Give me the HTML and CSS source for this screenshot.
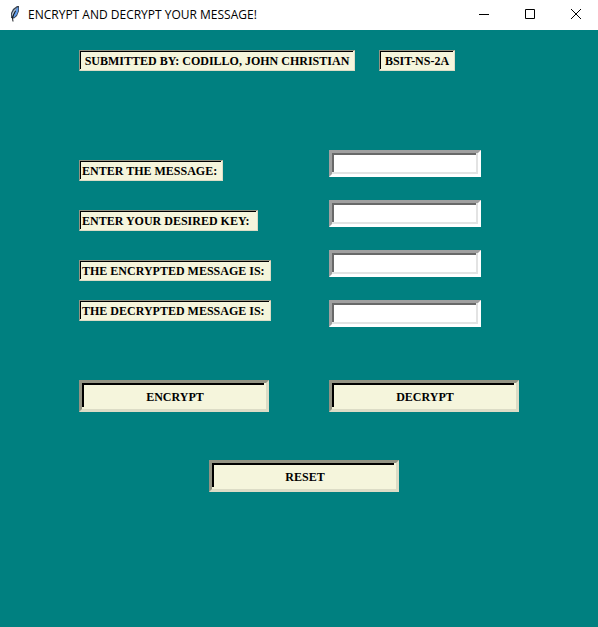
FILE: index.html
```html
<!DOCTYPE html>
<html lang="en">
<head>
<meta charset="utf-8">
<title>ENCRYPT AND DECRYPT YOUR MESSAGE!</title>
<link rel="stylesheet" href="styles.css">
</head>
<body>
<header class="titlebar">
  <svg class="feather" width="12" height="16" viewBox="0 0 12 16" aria-hidden="true">
    <path d="M8 0H10V5L8 10 5 12.500 2 12V7L4 3Z" fill="#39424e"/>
    <path d="M8 1.500 9.300 1.500 9.200 5 7.500 9 5 11.500 4 11 6 6Z" fill="#5f9cec"/>
    <path d="M8 1.500 5 4 3 7.500 2.800 11 5.500 6Z" fill="#b4c2d2"/>
    <path d="M6.500 5 4.500 9 3.500 12 4 15.500" fill="none" stroke="#15181c"/>
  </svg>
  <h1 class="title">ENCRYPT AND DECRYPT YOUR MESSAGE!</h1>
  <div class="controls">
    <button class="control" type="button" aria-label="Minimize">
      <svg width="10" height="10" viewBox="0 0 10 10"><path d="M0 5.500H10"/></svg>
    </button>
    <button class="control" type="button" aria-label="Maximize">
      <svg width="10" height="10" viewBox="0 0 10 10"><path d="M.5.5H9.500V9.500H.5Z"/></svg>
    </button>
    <button class="control" type="button" aria-label="Close">
      <svg width="10" height="10" viewBox="0 0 10 10"><path d="M0 0 10 10M10 0 0 10"/></svg>
    </button>
  </div>
</header>
<main class="content">
  <div class="credits">
    <p class="tag">SUBMITTED BY: CODILLO, JOHN CHRISTIAN</p>
    <p class="tag">BSIT-NS-2A</p>
  </div>
  <form class="form">
    <div class="fields">
      <label class="tag lowered" for="message">ENTER THE MESSAGE: </label>
      <input class="entry" id="message" type="text">
      <label class="tag lowered" for="key">ENTER YOUR DESIRED KEY:  </label>
      <input class="entry" id="key" type="text">
      <label class="tag lowered" for="encrypted">THE ENCRYPTED MESSAGE IS: </label>
      <input class="entry" id="encrypted" type="text">
      <label class="tag" for="decrypted">THE DECRYPTED MESSAGE IS: </label>
      <input class="entry" id="decrypted" type="text">
    </div>
    <div class="actions">
      <button class="action" type="button">ENCRYPT</button>
      <button class="action" type="button">DECRYPT</button>
    </div>
    <div class="reset-row">
      <button class="action" type="reset">RESET</button>
    </div>
  </form>
</main>
</body>
</html>
```
FILE: styles.css
```css
* {
  box-sizing: border-box;
}

body {
  margin: 0;
  min-height: 100vh;
  background: #008080;
  color: #000;
  font: bold 12px/15px "Liberation Serif", "Times New Roman", serif;
}

.titlebar {
  display: flex;
  align-items: center;
  height: 30px;
  padding-left: 9px;
  background: #fff;
}

.feather {
  margin: 0 7px 2px 0;
}

.title {
  margin: 0;
  font: 12px/16px "Segoe UI", "Open Sans", sans-serif;
}

.controls {
  display: flex;
  margin-left: auto;
}

.control {
  display: flex;
  align-items: center;
  justify-content: center;
  width: 46px;
  height: 30px;
  padding: 0 0 2px 2px;
  border: 0;
  background: none;
}

.control svg {
  fill: none;
  stroke: #000;
}

.content {
  max-width: 440px;
  margin: 0 auto;
  padding-top: 20px;
}

.credits {
  display: grid;
  grid-template-columns: 276px 76px;
  justify-content: start;
  gap: 24px;
}

.tag {
  margin: 0;
  padding: 3px 2px 1px;
  border: 1px solid;
  border-color: #939384 #dcdcc6 #dcdcc6 #939384;
  background: #f5f5dc;
  box-shadow: inset -1px -1px #f5f5dc, inset 1px 1px #000;
  white-space: pre;
}

.credits .tag {
  text-align: center;
}

.form {
  margin-top: 79px;
}

.fields {
  display: grid;
  grid-template-columns: 250px auto;
  grid-auto-rows: 50px;
  align-items: start;
  justify-content: start;
}

.fields .tag {
  justify-self: start;
}

.lowered {
  margin-top: 10px;
}

.entry {
  width: 152px;
  height: 27px;
  padding: 2px 4px;
  border: 3px solid;
  border-color: #a0a0a0 #fff #fff #a0a0a0;
  border-radius: 0;
  background: #fff;
  box-shadow: inset -2px -2px #e3e3e3, inset 2px 2px #696969;
  font: inherit;
}

.actions {
  display: grid;
  grid-template-columns: 190px 190px;
  gap: 60px;
  margin-top: 30px;
}

.action {
  width: 190px;
  height: 32px;
  padding: 2px 0 0 2px;
  border: 3px solid;
  border-color: #939384 #dcdcc6 #dcdcc6 #939384;
  border-radius: 0;
  background: #f5f5dc;
  box-shadow: inset -2px -2px #f5f5dc, inset 2px 2px #000;
  color: inherit;
  font: inherit;
}

.reset-row {
  display: flex;
  justify-content: center;
  margin-top: 48px;
  padding-left: 10px;
}
```
